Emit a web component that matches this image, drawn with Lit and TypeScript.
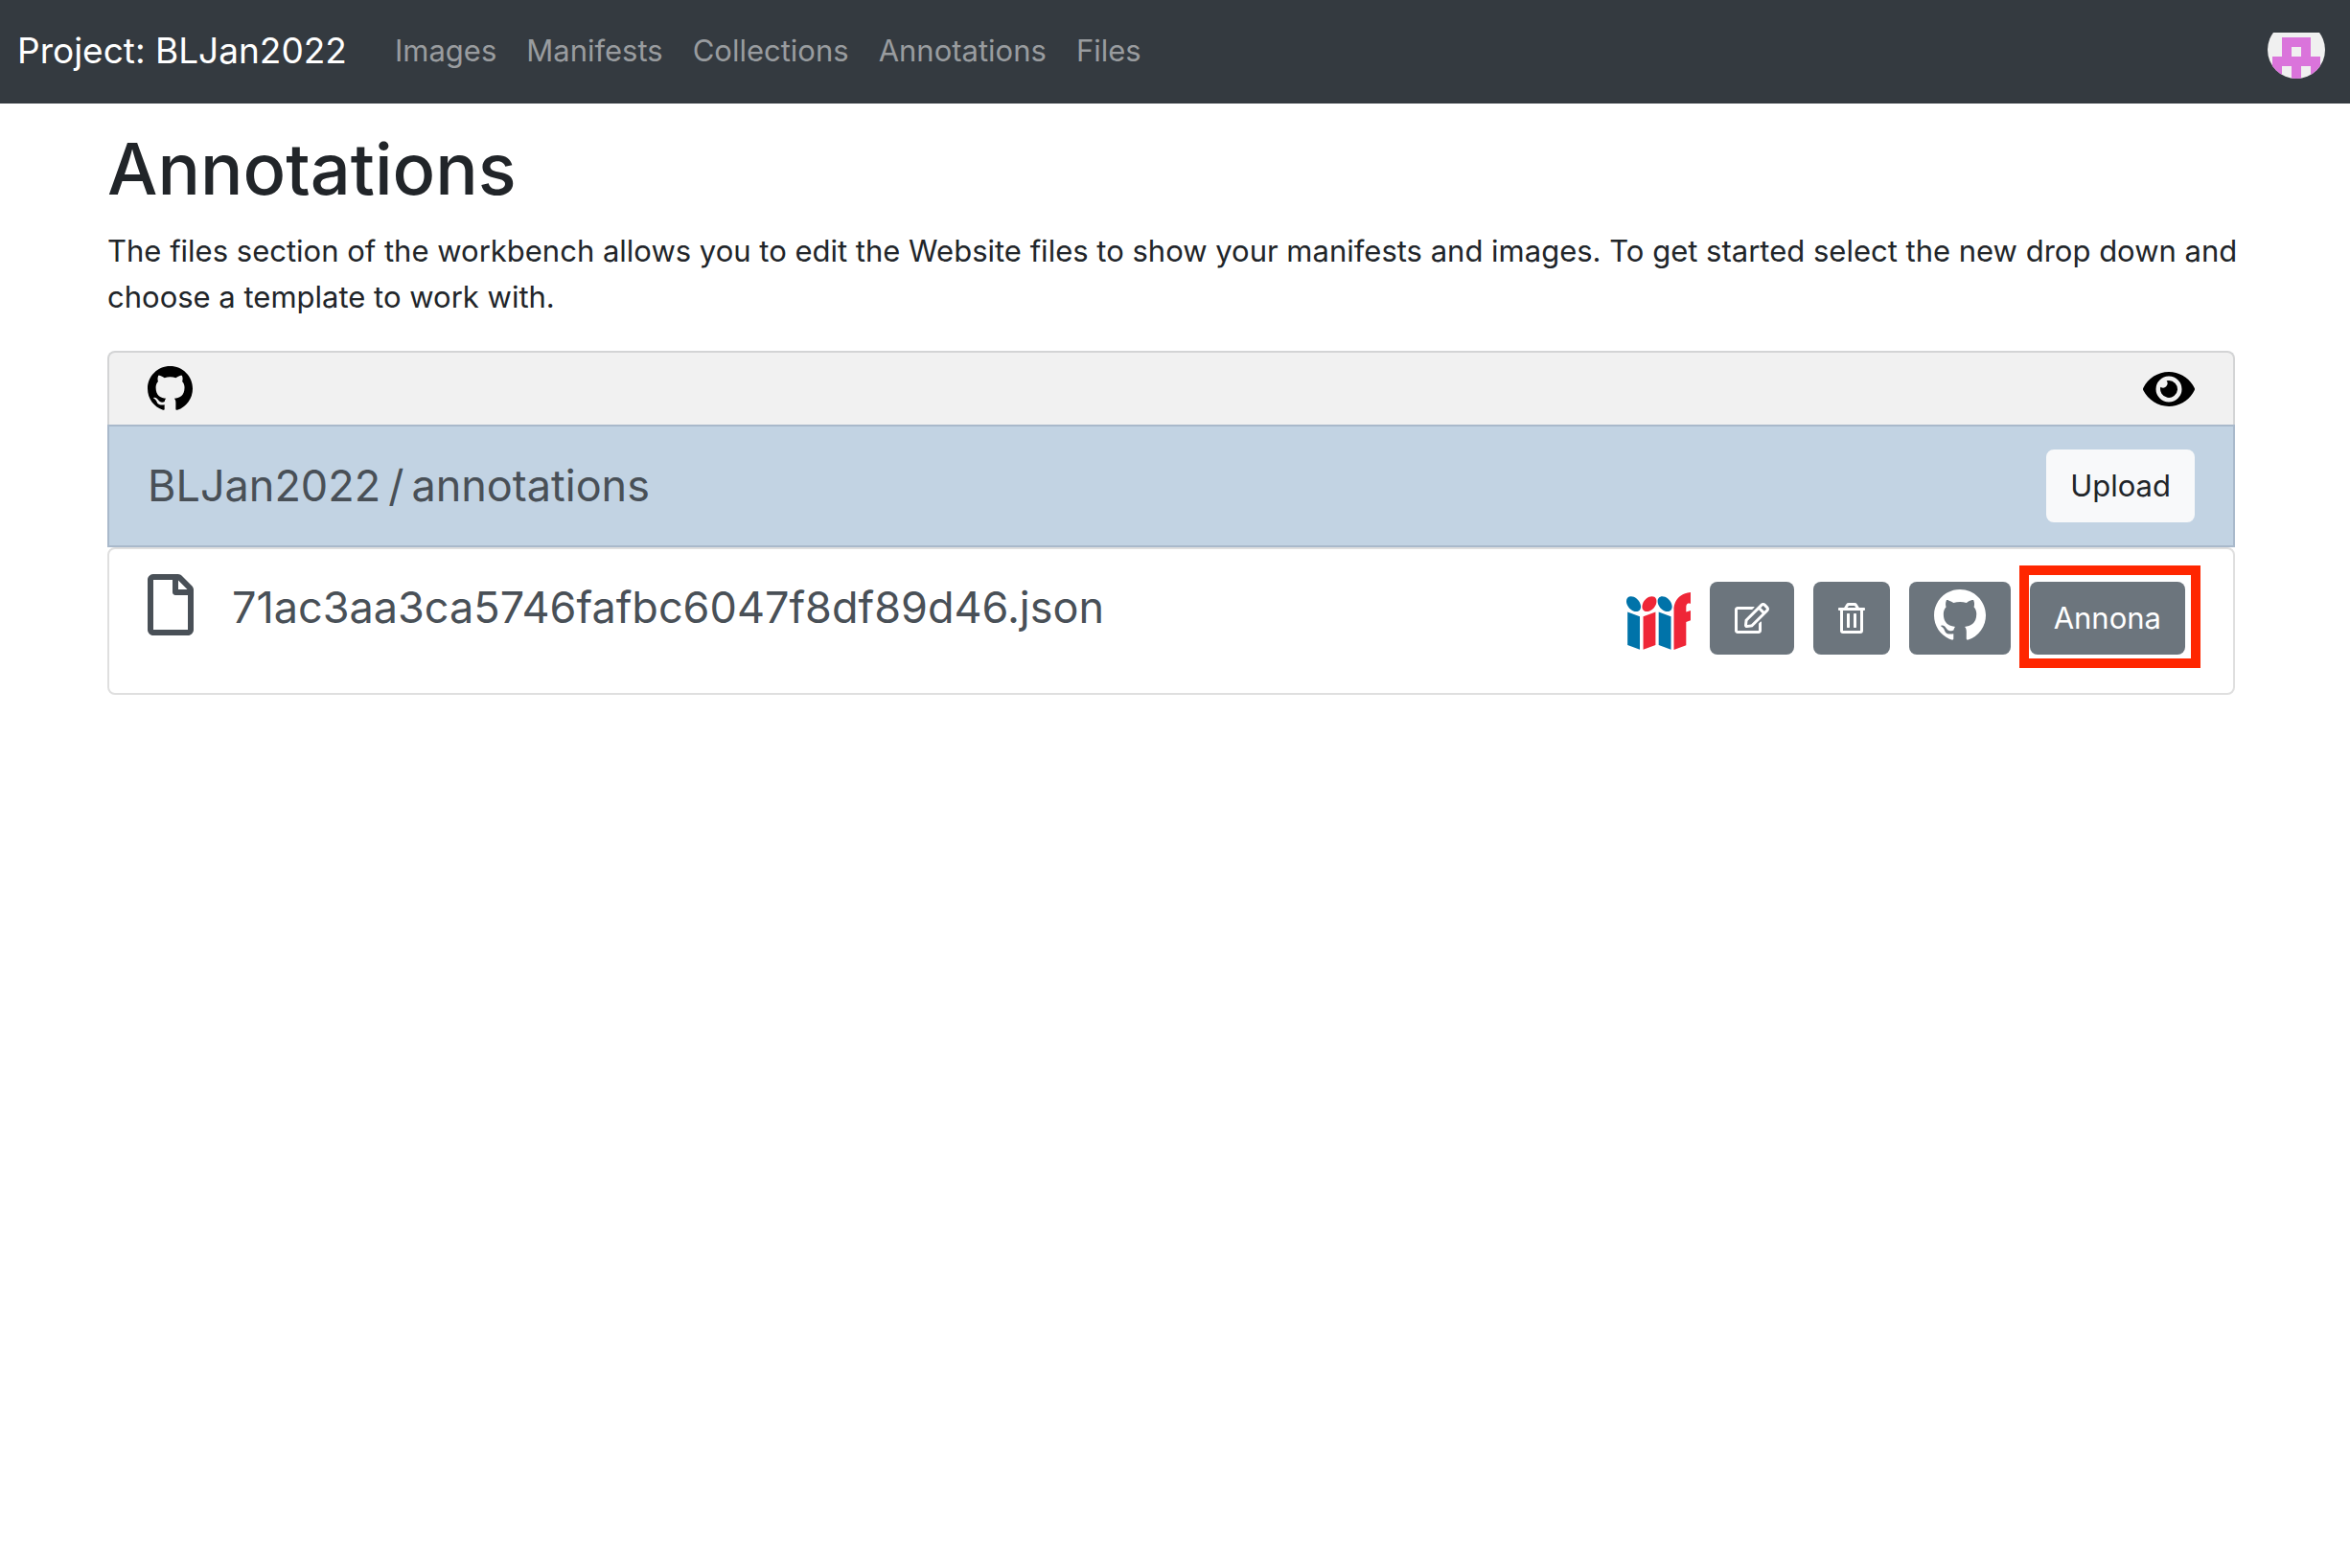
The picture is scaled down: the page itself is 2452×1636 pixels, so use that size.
import { LitElement, html, css, svg } from "lit";
import { customElement, state } from "lit/decorators.js";

const octocat = svg`<path d="M8 0C3.58 0 0 3.58 0 8c0 3.54 2.29 6.53 5.47 7.59.4.07.55-.17.55-.38 0-.19-.01-.82-.01-1.49-2.01.37-2.53-.49-2.69-.94-.09-.23-.48-.94-.82-1.13-.28-.15-.68-.52-.01-.53.63-.01 1.08.58 1.23.82.72 1.21 1.87.87 2.33.66.07-.52.28-.87.51-1.07-1.78-.2-3.64-.89-3.64-3.95 0-.87.31-1.59.82-2.15-.08-.2-.36-1.02.08-2.12 0 0 .67-.21 2.2.82.64-.18 1.32-.27 2-.27s1.36.09 2 .27c1.53-1.04 2.2-.82 2.2-.82.44 1.1.16 1.92.08 2.12.51.56.82 1.27.82 2.15 0 3.07-1.87 3.75-3.65 3.95.29.25.54.73.54 1.48 0 1.07-.01 1.93-.01 2.2 0 .21.15.46.55.38A8.01 8.01 0 0 0 16 8c0-4.42-3.58-8-8-8z"/>`;

@customElement("app-root")
export class AppRoot extends LitElement {
  static styles = css`
    :host {
      display: block;
      font-family: Inter, "Open Sans", sans-serif;
      font-size: 31px;
      line-height: 48px;
      color: #212529;
    }
    * {
      box-sizing: border-box;
    }
    svg {
      display: block;
      fill: currentColor;
    }
    a {
      color: inherit;
      text-decoration: none;
    }
    button {
      display: flex;
      align-items: center;
      justify-content: center;
      height: 76px;
      padding: 0 26px;
      border: 0;
      border-radius: 8px;
      font: inherit;
      color: #fff;
      background: #6c757d;
      cursor: pointer;
    }
    .navbar {
      display: flex;
      align-items: center;
      height: 108px;
      padding: 0 26px 2px 18px;
      background: #343a40;
    }
    .brand {
      margin-right: 50px;
      font-size: 37px;
      color: #fff;
    }
    .links {
      display: flex;
      flex: 1;
      gap: 31px;
      margin: 0;
      padding: 0;
      list-style: none;
      color: #999c9f;
    }
    .avatar {
      margin-top: 10px;
    }
    .page {
      padding: 20px 120px 0 112px;
    }
    h1 {
      margin: 0 0 14px;
      font-size: 74px;
      line-height: 96px;
      font-weight: 500;
    }
    p {
      margin: 0 -8px 32px 0;
    }
    .toolbar {
      display: flex;
      align-items: center;
      justify-content: space-between;
      height: 77px;
      padding: 0 40px;
      border: 2px solid #d3d4d5;
      border-bottom: 0;
      border-radius: 8px 8px 0 0;
      background: #f1f1f1;
      color: #000;
    }
    .pathbar {
      display: flex;
      align-items: center;
      justify-content: space-between;
      height: 128px;
      padding: 0 40px;
      border: 2px solid #a9b9cb;
      background: #c2d3e3;
    }
    h2 {
      display: flex;
      gap: 8px;
      margin: 0;
      font-size: 45px;
      line-height: 56px;
      font-weight: 400;
      color: #495057;
    }
    .labelled {
      padding: 0 25px;
    }
    .upload {
      color: #212529;
      background: #f8f9fa;
    }
    .file {
      display: flex;
      align-items: flex-start;
      justify-content: space-between;
      height: 154px;
      padding: 26px 50px 0 40px;
      border: 2px solid #dfdfdf;
      border-radius: 8px;
    }
    .name {
      display: flex;
      align-items: flex-start;
      gap: 40px;
      font-size: 45px;
      line-height: 70px;
      color: #495057;
    }
    .actions {
      display: flex;
      gap: 20px;
      padding-top: 8px;
    }
    .iiif {
      padding-top: 11px;
    }
    .repo {
      padding-bottom: 6px;
    }
    .marked {
      position: relative;
    }
    .marked::after {
      content: "";
      position: absolute;
      inset: -17px -16px -14px -11px;
      border: 10px solid #ff2600;
      pointer-events: none;
    }
  `;

  @state() private sections = ["Images", "Manifests", "Collections", "Annotations", "Files"];

  render() {
    return html`
      <nav class="navbar">
        <a class="brand" href="#">Project: BLJan2022</a>
        <ul class="links">
          ${this.sections.map((s) => html`<li><a href="#${s.toLowerCase()}">${s}</a></li>`)}
        </ul>
        <a class="avatar" href="#profile" aria-label="Profile">
          <svg width="60" height="48" viewBox="0 0 60 48">
            <clipPath id="round"><circle cx="30" cy="18" r="30" /></clipPath>
            <g clip-path="url(#round)">
              <rect width="60" height="48" fill="#f0f0f0" />
              <path
                fill="#da74db"
                fill-rule="evenodd"
                d="M15 5H45V25H55V48H45V35H35V48H25V35H15V48H5V25H15ZM25 15H35V25H25Z"
              />
            </g>
          </svg>
        </a>
      </nav>
      <main class="page">
        <h1>Annotations</h1>
        <p>
          The files section of the workbench allows you to edit the Website files to show your manifests and images. To
          get started select the new drop down and choose a template to work with.
        </p>
        <section>
          <div class="toolbar">
            <a href="#repository" aria-label="Repository">
              <svg width="47" height="47" viewBox="0 0 16 16">${octocat}</svg>
            </a>
            <a href="#preview" aria-label="Preview">
              <svg width="54" height="48" viewBox="0 0 576 512">
                <path
                  d="M572.52 241.4C518.29 135.59 410.93 64 288 64S57.68 135.64 3.48 241.41a32.35 32.35 0 0 0 0 29.19C57.71 376.41 165.07 448 288 448s230.32-71.64 284.52-177.41a32.35 32.35 0 0 0 0-29.19zM288 400a144 144 0 1 1 144-144 143.93 143.93 0 0 1-144 144zm0-240a95.31 95.31 0 0 0-25.31 3.79 47.85 47.85 0 0 1-66.9 66.9A95.78 95.78 0 1 0 288 160z"
                />
              </svg>
            </a>
          </div>
          <div class="pathbar">
            <h2><a href="#root">BLJan2022</a> <span>/</span> <a href="#annotations">annotations</a></h2>
            <button class="labelled upload" type="button">Upload</button>
          </div>
          <div class="file">
            <a class="name" href="#file">
              <svg width="48" height="64" viewBox="0 0 384 512">
                <path
                  d="M369.9 97.9L286 14C277 5 264.8-.1 252.1-.1H48C21.5 0 0 21.5 0 48v416c0 26.5 21.5 48 48 48h288c26.5 0 48-21.5 48-48V131.9c0-12.7-5.1-25-14.1-34zM332.1 128H256V51.9l76.1 76.1zM48 464V48h160v104c0 13.3 10.7 24 24 24h104v288H48z"
                />
              </svg>
              71ac3aa3ca5746fafbc6047f8df89d46.json
            </a>
            <div class="actions">
              <a class="iiif" href="#iiif" aria-label="IIIF">
                <svg width="67" height="60" viewBox="0 0 3700 3310">
                  <g transform="matrix(1 0 0 -1 0 3310)">
                    <path
                      fill="#0073a9"
                      d="M65 2179 775 1915 774 15 65 276ZM804 2640c82-241-26-436-241-436S109 2399 27 2640s26 436 241 436 455-195 536-436ZM1860 2179l710-264-1-1900-709 261ZM2604 2640c81-241-27-436-241-436-215 0-455 195-536 436s26 436 241 436 454-195 536-436Z"
                    />
                    <path
                      fill="#ef2637"
                      d="M1679 2179 969 1915 970 15 1679 276ZM935 2640c-81-241 27-436 241-436 215 0 455 195 536 436s-26 436-241 436-454-195-536-436ZM3700 3310V2658s-230 90-257-143c-3-247 0-336 0-336l257 84V1690l-258-92V262L2735 0V2360s-15 850 965 950Z"
                    />
                  </g>
                </svg>
              </a>
              <button type="button" aria-label="Edit">
                <svg width="36" height="32" viewBox="0 0 576 512">
                  <path
                    d="M402.3 344.9l32-32c5-5 13.7-1.5 13.7 5.7V464c0 26.5-21.5 48-48 48H48c-26.5 0-48-21.5-48-48V112c0-26.5 21.5-48 48-48h273.5c7.1 0 10.7 8.6 5.7 13.7l-32 32c-1.5 1.5-3.5 2.3-5.7 2.3H48v352h352V350.5c0-2.1.8-4.1 2.3-5.6zm156.6-201.8L296.3 405.7l-90.4 10c-26.2 2.9-48.5-19.2-45.6-45.6l10-90.4L432.9 17.1c22.9-22.9 59.9-22.9 82.7 0l43.2 43.2c22.9 22.9 22.9 60 .1 82.8zM460.1 174L402 115.9 216.2 301.8l-7.3 65.3 65.3-7.3L460.1 174zm64.8-79.7l-43.2-43.2c-4.1-4.1-10.8-4.1-14.8 0L436 82l58.1 58.1 30.9-30.9c4-4.2 4-10.8-.1-14.9z"
                  />
                </svg>
              </button>
              <button type="button" aria-label="Delete">
                <svg width="28" height="32" viewBox="0 0 448 512">
                  <path
                    d="M268 416h24a12 12 0 0 0 12-12V188a12 12 0 0 0-12-12h-24a12 12 0 0 0-12 12v216a12 12 0 0 0 12 12zM432 80h-82.41l-34-56.7A48 48 0 0 0 274.41 0H173.59a48 48 0 0 0-41.16 23.3L98.41 80H16A16 16 0 0 0 0 96v16a16 16 0 0 0 16 16h16v336a48 48 0 0 0 48 48h288a48 48 0 0 0 48-48V128h16a16 16 0 0 0 16-16V96a16 16 0 0 0-16-16zM171.84 50.91A6 6 0 0 1 177 48h94a6 6 0 0 1 5.15 2.91L293.61 80H154.39zM368 464H80V128h288zm-212-48h24a12 12 0 0 0 12-12V188a12 12 0 0 0-12-12h-24a12 12 0 0 0-12 12v216a12 12 0 0 0 12 12z"
                  />
                </svg>
              </button>
              <button class="repo" type="button" aria-label="View on GitHub">
                <svg width="54" height="54" viewBox="0 0 16 16">${octocat}</svg>
              </button>
              <button class="labelled marked" type="button">Annona</button>
            </div>
          </div>
        </section>
      </main>
    `;
  }
}
